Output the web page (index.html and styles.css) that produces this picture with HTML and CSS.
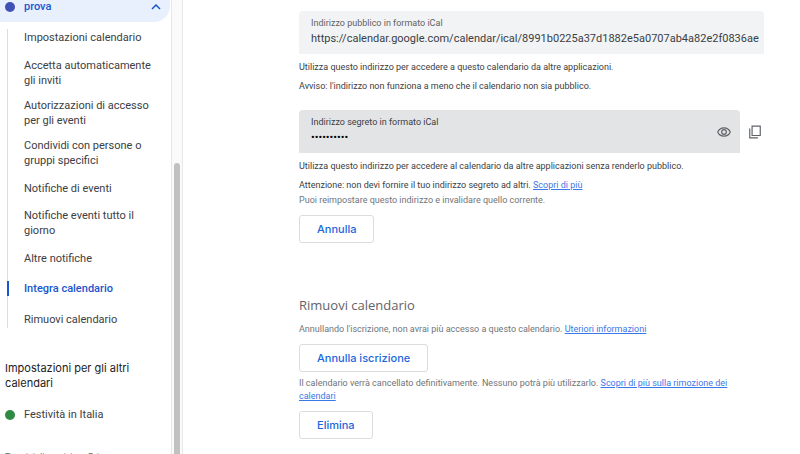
FILE: index.html
```html
<!DOCTYPE html>
<html lang="it">
<head>
  <meta charset="UTF-8">
  <meta name="viewport" content="width=device-width, initial-scale=1.0">
  <title>Impostazioni calendario</title>
  <link rel="stylesheet" href="styles.css">
</head>
<body>
  <aside class="sidebar">
    <nav class="sidebar-content">
      <button class="calendar-toggle" aria-expanded="true">
        <span class="dot dot-blue"></span>
        <span class="calendar-name">prova</span>
        <svg class="chevron" viewBox="0 0 10 6" aria-hidden="true"><path d="M1 5l4-4 4 4"/></svg>
      </button>
      <ul class="menu">
        <li><a href="#">Impostazioni calendario</a></li>
        <li><a href="#">Accetta automaticamente gli inviti</a></li>
        <li><a href="#">Autorizzazioni di accesso per gli eventi</a></li>
        <li><a href="#">Condividi con persone o gruppi specifici</a></li>
        <li><a href="#">Notifiche di eventi</a></li>
        <li><a href="#">Notifiche eventi tutto il giorno</a></li>
        <li><a href="#">Altre notifiche</a></li>
        <li><a href="#integra" class="active">Integra calendario</a></li>
        <li><a href="#rimuovi">Rimuovi calendario</a></li>
      </ul>
      <h2 class="sidebar-title">Impostazioni per gli altri calendari</h2>
      <a href="#" class="other-calendar">
        <span class="dot dot-green"></span>
        <span>Festività in Italia</span>
      </a>
      <p class="terms">Termini di servizio – Privacy</p>
    </nav>
    <div class="scrollbar"><div class="thumb"></div></div>
  </aside>

  <main class="content">
    <section id="integra">
      <div class="field field-public">
        <label for="public-address">Indirizzo pubblico in formato iCal</label>
        <input type="text" id="public-address" readonly value="https://calendar.google.com/calendar/ical/8991b0225a37d1882e5a0707ab4a82e2f0836ae">
      </div>
      <p class="help">Utilizza questo indirizzo per accedere a questo calendario da altre applicazioni.</p>
      <p class="help">Avviso: l'indirizzo non funziona a meno che il calendario non sia pubblico.</p>

      <div class="field-row">
        <div class="field field-secret">
          <div class="field-text">
            <label for="secret-address">Indirizzo segreto in formato iCal</label>
            <input type="password" id="secret-address" readonly value="abcdefghij">
          </div>
          <button class="icon-btn" aria-label="Mostra indirizzo">
            <svg width="14" height="14" viewBox="0 0 24 24" aria-hidden="true">
              <path d="M12 4.800C7 4.800 3 7.700 1.300 12 3 16.300 7 19.200 12 19.200s9-2.900 10.700-7.200C21 7.700 17 4.800 12 4.800z"/>
              <circle cx="12" cy="12" r="4"/>
            </svg>
          </button>
        </div>
        <button class="icon-btn" aria-label="Copia negli appunti">
          <svg width="14" height="14" viewBox="0 0 24 24" aria-hidden="true">
            <path d="M7 2h14v16H7z"/>
            <path d="M3 6v16h14"/>
          </svg>
        </button>
      </div>
      <p class="help">Utilizza questo indirizzo per accedere al calendario da altre applicazioni senza renderlo pubblico.</p>
      <p class="help">Attenzione: non devi fornire il tuo indirizzo segreto ad altri. <a href="#">Scopri di più</a></p>
      <p class="note">Puoi reimpostare questo indirizzo e invalidare quello corrente.</p>
      <button class="btn">Annulla</button>
    </section>

    <section id="rimuovi" class="remove">
      <h1>Rimuovi calendario</h1>
      <p class="note">Annullando l'iscrizione, non avrai più accesso a questo calendario. <a href="#">Uteriori informazioni</a></p>
      <button class="btn">Annulla iscrizione</button>
      <p class="note">Il calendario verrà cancellato definitivamente. Nessuno potrà più utilizzarlo. <a href="#">Scopri di più sulla rimozione dei calendari</a></p>
      <button class="btn">Elimina</button>
    </section>
  </main>
</body>
</html>
```

FILE: styles.css
```css
* {
  box-sizing: border-box;
}

body {
  font-family: Roboto, Arial, sans-serif;
  margin: 0;
  height: 100vh;
  display: flex;
  overflow: hidden;
  background-color: #fff;
  color: #3c4043;
}

h1,
h2,
p,
ul {
  margin: 0;
  padding: 0;
  font-weight: normal;
}

button,
input {
  font-family: inherit;
  border: none;
  background: none;
  padding: 0;
}

button {
  cursor: pointer;
}

.sidebar {
  display: flex;
  flex: 0 0 183px;
  overflow: hidden;
}

.sidebar-content {
  flex: 1;
  font-size: 11px;
  line-height: 15px;
}

.calendar-toggle {
  display: flex;
  align-items: center;
  width: 170px;
  padding: 0 9px 8px 5px;
  background-color: #e8f0fe;
  border-radius: 0 0 16px 0;
  color: #1a56cc;
  font-size: 11px;
  font-weight: 500;
  line-height: 14px;
  text-align: left;
}

.calendar-name {
  flex: 1;
}

.dot {
  width: 10px;
  height: 10px;
  margin-right: 9px;
  border-radius: 50%;
}

.dot-blue {
  background-color: #3f51b5;
}

.dot-green {
  background-color: #2f8a43;
}

.chevron {
  width: 10px;
  height: 6px;
  fill: none;
  stroke: #1a56cc;
  stroke-width: 1.5;
}

.menu {
  list-style: none;
  margin: 7px 15px 0 7px;
  border-left: 1px solid #dadce0;
}

.menu li {
  display: flex;
  align-items: center;
  min-height: 30px;
  padding: 5px 0;
}

.menu li:first-child {
  min-height: 24px;
  padding: 0 0 7px;
}

.menu li:last-child {
  min-height: 25px;
  padding: 7px 0 0;
}

.menu a {
  margin-left: -1px;
  padding-left: 17px;
  color: #3c4043;
  text-decoration: none;
}

.menu .active {
  padding-left: 15px;
  border-left: 2px solid #1a56cc;
  color: #1a56cc;
  font-weight: 500;
}

.sidebar-title {
  margin: 33px 24px 0 5px;
  color: #202124;
  font-family: Inter, sans-serif;
  font-size: 11px;
}

.other-calendar {
  display: flex;
  align-items: center;
  padding: 16px 0 0 5px;
  color: #3c4043;
  text-decoration: none;
}

.terms {
  padding: 28px 0 0 5px;
  color: #70757a;
  font-size: 9px;
  white-space: nowrap;
}

.scrollbar {
  display: flex;
  width: 12px;
  padding: 163px 2px 0 2px;
  background-color: #fafafa;
  border-left: 1px solid #e8e8e8;
  border-right: 1px solid #e8e8e8;
}

.thumb {
  flex: 1;
  background-color: #c1c1c1;
  border-radius: 3px 3px 0 0;
}

.content {
  flex: 1;
  min-width: 0;
  padding: 11px 36px 0 116px;
}

.field {
  height: 43px;
  padding: 6px 12px;
  background-color: #f1f3f4;
  border-radius: 4px 4px 0 0;
}

.field-public {
  margin-bottom: 7px;
  padding-right: 4px;
}

.field label {
  display: block;
  color: #5f6368;
  font-size: 9px;
  line-height: 13px;
}

.field input {
  display: block;
  width: 100%;
  height: 17px;
  color: #3c4043;
  font-size: 11px;
  outline: none;
}

.field-row {
  display: flex;
  align-items: center;
  gap: 8px;
  margin: 17px 2px 7px 0;
}

.field-secret {
  display: flex;
  align-items: center;
  flex: 1;
  padding-right: 9px;
  background-color: #e3e4e6;
}

.field-text {
  flex: 1;
  align-self: flex-start;
}

.field-secret label {
  color: #3c4043;
}

.field-secret input {
  color: #000;
}

.icon-btn {
  display: flex;
}

.icon-btn svg {
  fill: none;
  stroke: #5f6368;
  stroke-width: 2;
}

.help,
.note {
  font-size: 9px;
  line-height: 13px;
}

.help {
  margin-top: 6px;
}

.note {
  margin-top: 2px;
  color: #70757a;
}

.help a,
.note a {
  color: #3b78e7;
}

.btn {
  display: block;
  height: 28px;
  margin: 8px 0 5px;
  padding: 0 17px;
  border: 1px solid #dadce0;
  border-radius: 3px;
  color: #1a66dc;
  font-family: Inter, sans-serif;
  font-size: 11px;
  font-weight: 500;
}

.remove {
  margin-top: 53px;
}

.remove h1 {
  margin-bottom: 9px;
  color: #5f6368;
  font-family: "Open Sans", sans-serif;
  font-size: 13px;
  line-height: 18px;
}
```
